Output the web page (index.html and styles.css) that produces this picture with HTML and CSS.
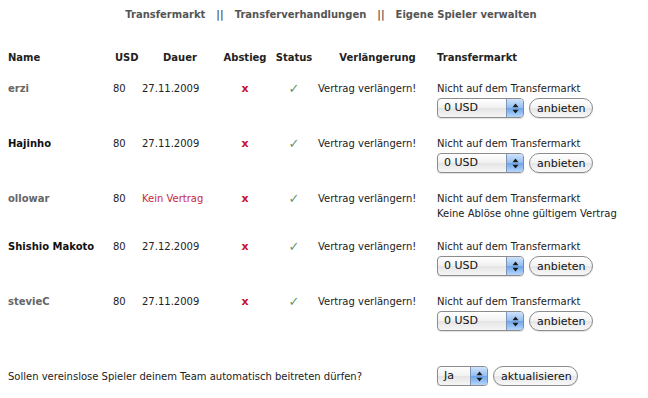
FILE: index.html
```html
<!DOCTYPE html>
<html lang="de">
<head>
    <meta charset="UTF-8">
    <title>Transfermarkt</title>
    <link rel="stylesheet" href="styles.css">
</head>
<body>
    <div class="nav">
        <a href="#">Transfermarkt</a><span class="sep">||</span><a href="#">Transferverhandlungen</a><span class="sep">||</span><a href="#">Eigene Spieler verwalten</a>
    </div>

    <table class="players">
        <colgroup>
            <col class="c-name"><col class="c-usd"><col class="c-dauer"><col class="c-abstieg"><col class="c-status"><col class="c-verl"><col class="c-tm">
        </colgroup>
        <tr>
            <th class="left">Name</th>
            <th class="usd">USD</th>
            <th>Dauer</th>
            <th>Abstieg</th>
            <th>Status</th>
            <th>Verlängerung</th>
            <th class="left">Transfermarkt</th>
        </tr>
        <tr>
            <td><a class="player" href="#">erzi</a></td>
            <td class="usd">80</td>
            <td class="dauer">27.11.2009</td>
            <td class="mid"><span class="no">x</span></td>
            <td class="mid"><span class="ok">&#10003;</span></td>
            <td>Vertrag verlängern!</td>
            <td>
                <div>Nicht auf dem Transfermarkt</div>
                <div class="offer">
                    <span class="select sel-usd"><span class="select-value">0 USD</span><span class="select-arrow"><svg width="7" height="11" viewBox="0 0 7 11"><path d="M3.5 0.5L6.5 4.2H0.5z M3.5 10.5L0.5 6.8h6z" fill="#1a1a1a"/></svg></span></span>
                    <button class="btn">anbieten</button>
                </div>
            </td>
        </tr>
        <tr>
            <td><a class="player own" href="#">Hajinho</a></td>
            <td class="usd">80</td>
            <td class="dauer">27.11.2009</td>
            <td class="mid"><span class="no">x</span></td>
            <td class="mid"><span class="ok">&#10003;</span></td>
            <td>Vertrag verlängern!</td>
            <td>
                <div>Nicht auf dem Transfermarkt</div>
                <div class="offer">
                    <span class="select sel-usd"><span class="select-value">0 USD</span><span class="select-arrow"><svg width="7" height="11" viewBox="0 0 7 11"><path d="M3.5 0.5L6.5 4.2H0.5z M3.5 10.5L0.5 6.8h6z" fill="#1a1a1a"/></svg></span></span>
                    <button class="btn">anbieten</button>
                </div>
            </td>
        </tr>
        <tr>
            <td><a class="player" href="#">ollowar</a></td>
            <td class="usd">80</td>
            <td class="dauer expired">Kein Vertrag</td>
            <td class="mid"><span class="no">x</span></td>
            <td class="mid"><span class="ok">&#10003;</span></td>
            <td>Vertrag verlängern!</td>
            <td>
                <div>Nicht auf dem Transfermarkt</div>
                <div>Keine Ablöse ohne gültigem Vertrag</div>
            </td>
        </tr>
        <tr>
            <td><a class="player own" href="#">Shishio Makoto</a></td>
            <td class="usd">80</td>
            <td class="dauer">27.12.2009</td>
            <td class="mid"><span class="no">x</span></td>
            <td class="mid"><span class="ok">&#10003;</span></td>
            <td>Vertrag verlängern!</td>
            <td>
                <div>Nicht auf dem Transfermarkt</div>
                <div class="offer">
                    <span class="select sel-usd"><span class="select-value">0 USD</span><span class="select-arrow"><svg width="7" height="11" viewBox="0 0 7 11"><path d="M3.5 0.5L6.5 4.2H0.5z M3.5 10.5L0.5 6.8h6z" fill="#1a1a1a"/></svg></span></span>
                    <button class="btn">anbieten</button>
                </div>
            </td>
        </tr>
        <tr>
            <td><a class="player" href="#">stevieC</a></td>
            <td class="usd">80</td>
            <td class="dauer">27.11.2009</td>
            <td class="mid"><span class="no">x</span></td>
            <td class="mid"><span class="ok">&#10003;</span></td>
            <td>Vertrag verlängern!</td>
            <td>
                <div>Nicht auf dem Transfermarkt</div>
                <div class="offer">
                    <span class="select sel-usd"><span class="select-value">0 USD</span><span class="select-arrow"><svg width="7" height="11" viewBox="0 0 7 11"><path d="M3.5 0.5L6.5 4.2H0.5z M3.5 10.5L0.5 6.8h6z" fill="#1a1a1a"/></svg></span></span>
                    <button class="btn">anbieten</button>
                </div>
            </td>
        </tr>
    </table>

    <div class="auto-join">
        <span class="question">Sollen vereinslose Spieler deinem Team automatisch beitreten dürfen?</span>
        <span class="select sel-ja"><span class="select-value">Ja</span><span class="select-arrow"><svg width="7" height="11" viewBox="0 0 7 11"><path d="M3.5 0.5L6.5 4.2H0.5z M3.5 10.5L0.5 6.8h6z" fill="#1a1a1a"/></svg></span></span>
        <button class="btn">aktualisieren</button>
    </div>
</body>
</html>
```

FILE: styles.css
```css
body {
    margin: 0;
    padding: 0 8px;
    background-color: #fff;
    color: #222;
    font-family: "DejaVu Sans", Verdana, sans-serif;
    font-size: 10px;
    line-height: 15px;
}

a {
    text-decoration: none;
}

.nav {
    padding: 7px 0 0 14px;
    text-align: center;
    font-weight: bold;
}

.nav a {
    color: #555;
}

.nav .sep {
    color: #555;
    margin: 0 11px;
}

.players {
    width: 632px;
    margin-top: 20px;
    border-collapse: collapse;
    table-layout: fixed;
}

.c-name { width: 100px; }
.c-usd { width: 32px; }
.c-dauer { width: 80px; }
.c-abstieg { width: 50px; }
.c-status { width: 48px; }
.c-verl { width: 119px; }

.players th {
    padding: 8px 0 7px;
    font-weight: bold;
    color: #222;
    text-align: center;
    white-space: nowrap;
}

.players th.left {
    text-align: left;
}

.players th.usd {
    text-align: left;
    padding-left: 7px;
}

.players td {
    padding: 9px 0;
    vertical-align: top;
    white-space: nowrap;
}

.players td.usd {
    padding-left: 5px;
}

.players td.dauer {
    padding-left: 2px;
}

.players td.mid {
    text-align: center;
}

.player {
    font-weight: bold;
    color: #666;
}

.player.own {
    color: #111;
}

.expired {
    color: #c8283c;
}

.no {
    color: #c8102e;
    font-weight: bold;
    font-size: 11px;
}

.ok {
    color: #5f9670;
    font-size: 13px;
}

.offer {
    display: flex;
    align-items: center;
    gap: 5px;
    margin-top: 2px;
}

.select {
    display: inline-flex;
    box-sizing: border-box;
    height: 20px;
    border: 1px solid #8c8c8c;
    border-radius: 4px;
    overflow: hidden;
    background: linear-gradient(#ffffff, #f1f1f1 50%, #e4e4e4 51%, #f6f6f6);
    box-shadow: 0 1px 1px rgba(0, 0, 0, 0.12);
}

.select-value {
    flex: 1;
    padding-left: 6px;
    line-height: 18px;
    font-size: 11px;
    color: #111;
}

.select-arrow {
    display: flex;
    align-items: center;
    justify-content: center;
    width: 16px;
    border-left: 1px solid #7b95b8;
    background: linear-gradient(#cfe3fb, #93bdf0 50%, #6ea4e8 51%, #b5d6fb);
}

.sel-usd {
    width: 87px;
}

.sel-ja {
    width: 51px;
}

.btn {
    box-sizing: border-box;
    height: 20px;
    padding: 0 7px;
    border: 1px solid #8c8c8c;
    border-radius: 10px;
    background: linear-gradient(#ffffff, #f3f3f3 50%, #e6e6e6 51%, #f8f8f8);
    box-shadow: 0 1px 1px rgba(0, 0, 0, 0.12);
    font-family: "DejaVu Sans", Verdana, sans-serif;
    font-size: 11px;
    color: #111;
}

.sel-usd + .btn {
    width: 64px;
}

.auto-join {
    display: flex;
    align-items: center;
    margin-top: 26px;
}

.auto-join .question {
    width: 429px;
}

.auto-join .btn {
    margin-left: 5px;
    width: 85px;
}
```
